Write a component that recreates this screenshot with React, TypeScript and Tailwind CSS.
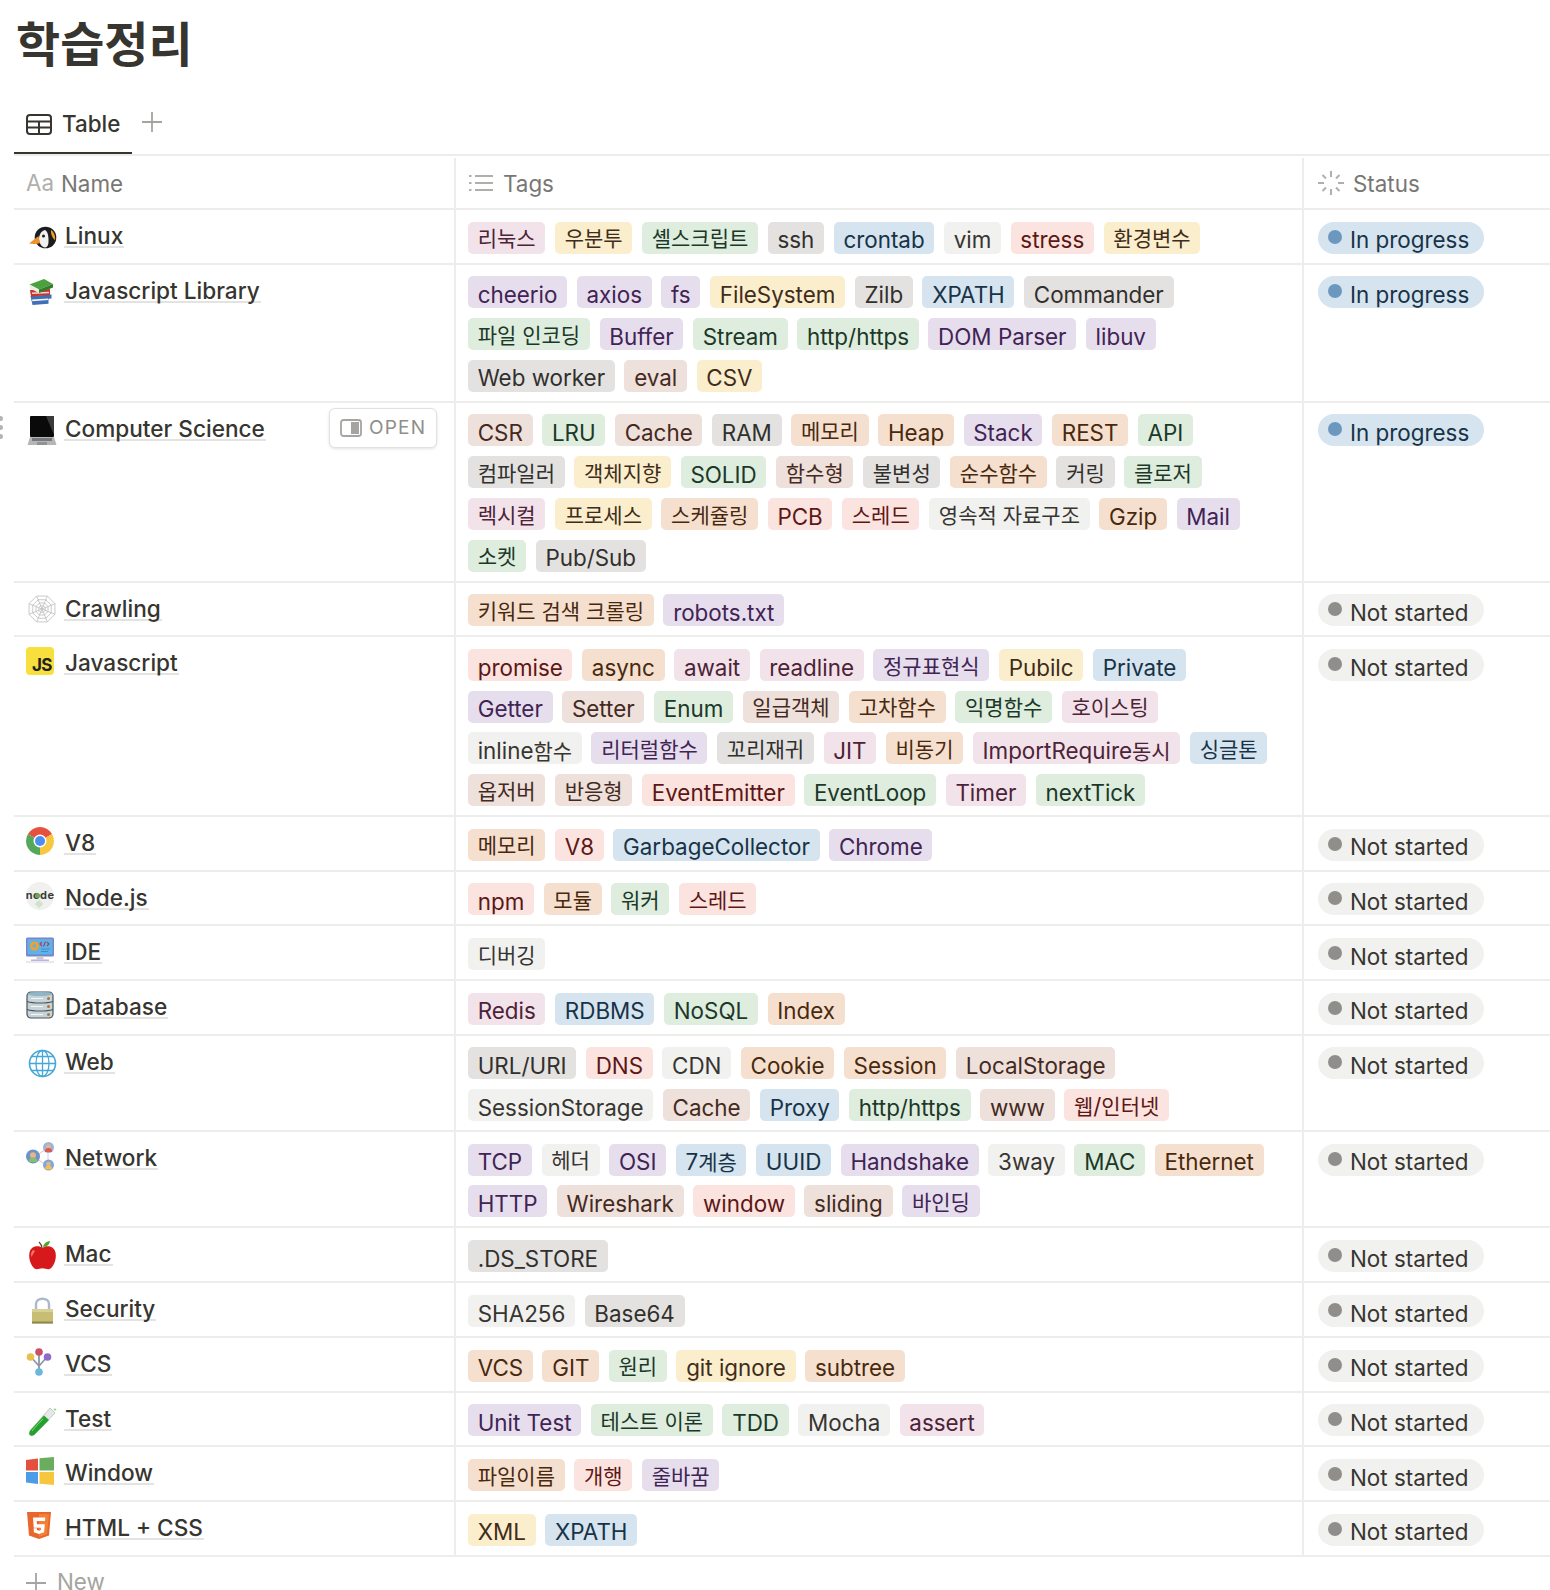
import React from 'react';

type Color = 'gy' | 'd' | 'br' | 'o' | 'y' | 'g' | 'bl' | 'pu' | 'pk' | 'r';

const tagStyles: Record<Color, string> = {
  gy: 'bg-[#e3e2e0] text-[#32302c]',
  d: 'bg-[#f1f1f0] text-[#37352f]',
  br: 'bg-[#eee0db] text-[#442a1e]',
  o: 'bg-[#f5e0d0] text-[#49290e]',
  y: 'bg-[#fbeecc] text-[#402c1b]',
  g: 'bg-[#deeddd] text-[#1c3829]',
  bl: 'bg-[#d5e4ee] text-[#183347]',
  pu: 'bg-[#e6deed] text-[#412454]',
  pk: 'bg-[#f2e2ea] text-[#4c2337]',
  r: 'bg-[#fbe3df] text-[#5d1715]',
};

const Svg: React.FC<{ children: React.ReactNode }> = ({ children }) => (
  <svg width="28" height="28" viewBox="0 0 28 28" className="overflow-visible">
    {children}
  </svg>
);

const Penguin = () => (
  <Svg>
    <circle cx="19.500" cy="17.500" r="10.800" fill="#1d1d20" />
    <path d="M19 10c-4 1-6 5-6 9 0 4 2.500 8 6 8.500 3-.5 3.500-3 3.500-7 0-4-.5-9-3.500-10.500z" fill="#f1f1ee" />
    <path d="M25 10c3 2 4.500 6 4 10-2-1-4.500-6-4-10z" fill="#f0a020" />
    <circle cx="17.500" cy="16" r="1.500" fill="#1d1d20" />
    <path d="M12.500 16 3 23.500c3 .8 8 .5 11-.5z" fill="#f0922a" />
  </Svg>
);

const Books = () => (
  <Svg>
    <g transform="translate(1 0)">
      <path d="M3.500 21l21-1.500v4l-3 .3v5l-16 1.200z" fill="#3f6fb5" />
      <path d="M3 15l20-1v6l-19 1.500z" fill="#c9342f" />
      <path d="M5 24.500l16-1 .3 1.500-16 1.200z" fill="#f3f3f3" />
      <path d="M5 17.500l17-.8v1.500l-17 .9z" fill="#f1d9d0" />
      <path d="M2.500 9.500L17 4l9 5-14 5.500z" fill="#4ba13e" />
      <path d="M2.500 9.500l9.500 5v3.500L3 13.500z" fill="#e9efe4" />
      <path d="M12 14.500l14-5.500v3.500l-14 5.500z" fill="#2f7d2b" />
    </g>
  </Svg>
);

const Laptop = () => (
  <Svg>
    <rect x="4" y="3" width="24" height="21" rx="1" fill="#0a0a0a" />
    <path d="M20 3h7c.6 0 1 .4 1 1v18z" fill="#3a3a3c" />
    <path d="M4 24h24l2.500 8H1.500z" fill="#b4b6b8" />
    <rect x="6" y="25" width="20" height="3" fill="#77797c" />
    <rect x="11" y="29" width="10" height="3" fill="#909295" />
  </Svg>
);

const Web = () => {
  const pts = (r: number) =>
    Array.from({ length: 8 }, (_, i) => {
      const a = (i * Math.PI) / 4 + Math.PI / 8;
      return `${16 + r * Math.cos(a)},${16 + r * Math.sin(a)}`;
    }).join(' ');
  return (
    <Svg>
      {[14, 10, 6.500, 3.500].map((r) => (
        <polygon key={r} points={pts(r)} fill="none" stroke="#bdbdbb" strokeWidth="0.800" />
      ))}
      {[0, 1, 2, 3].map((i) => {
        const a = (i * Math.PI) / 4 + Math.PI / 8;
        return (
          <line
            key={i}
            x1={16 - 14 * Math.cos(a)}
            y1={16 - 14 * Math.sin(a)}
            x2={16 + 14 * Math.cos(a)}
            y2={16 + 14 * Math.sin(a)}
            stroke="#bdbdbb"
            strokeWidth="0.800"
          />
        );
      })}
    </Svg>
  );
};

const JsLogo = () => (
  <div className="flex h-[28px] w-[28px] items-end justify-end rounded-[4px] bg-[#f7df3e] pr-[2px] text-[17px] leading-[20px] font-bold tracking-[-0.5px] text-[#222]">
    JS
  </div>
);

const Chrome = () => (
  <Svg>
    <path d="M14 14L1.900 7A14 14 0 0 1 26.100 7Z" fill="#e5503f" />
    <path d="M14 14L26.100 7A14 14 0 0 1 14 28Z" fill="#f8c73d" />
    <path d="M14 14L14 28A14 14 0 0 1 1.900 7Z" fill="#55a85a" />
    <circle cx="14" cy="14" r="6.500" fill="#fff" />
    <circle cx="14" cy="14" r="5" fill="#4c8ff0" />
  </Svg>
);

const NodeLogo = () => (
  <div className="relative flex h-[28px] w-[28px] justify-center rounded-full bg-[#f0f0ef] pt-[8px] text-[11px] leading-[11px] font-bold tracking-[0.4px] text-[#3c3c3c]">
    node
    <span className="absolute top-[19px] left-[10px] h-[6px] w-[6px] rotate-45 bg-[#cfe3cf]" />
    <span className="absolute top-[11px] left-[9px] h-[5px] w-[5px] rounded-full bg-[#6aa84f]" />
  </div>
);

const Ide = () => (
  <Svg>
    <rect x="0" y="1.500" width="28" height="19" rx="1.500" fill="#7b84c8" />
    <rect x="1.500" y="3" width="25" height="15.500" fill="#5db3e8" />
    <circle cx="8.500" cy="10" r="4.500" fill="#f3a02e" />
    <circle cx="8.500" cy="10" r="1.800" fill="#5db3e8" />
    <path d="M16 6l-2 2 2 2M21 6l2 2-2 2M19.500 5.500l-2 5" fill="none" stroke="#a83d5c" strokeWidth="1.100" />
    <path d="M15 13h9M15 15.500h7" stroke="#3f8fc8" strokeWidth="1.200" />
    <rect x="10.500" y="20.500" width="7" height="3" fill="#c9c9d4" />
    <rect x="5" y="23.500" width="18" height="1.500" fill="#b9b6d6" />
    <rect x="0" y="25.500" width="28" height="1" fill="#d6d3e6" />
  </Svg>
);

const Database = () => (
  <Svg>
    <rect x="1" y="1" width="26" height="26" rx="4" fill="#c6d4da" stroke="#48545a" strokeWidth="1.200" />
    <ellipse cx="14" cy="3" rx="12.500" ry="2" fill="#8fb6c7" />
    <path d="M1 10.500c6 2 20 2 26 0M1 18.500c6 2 20 2 26 0" fill="none" stroke="#48545a" strokeWidth="1.200" />
    <path d="M5 7.500h12M5 15.500h12M5 23.500h12" stroke="#f3f5f6" strokeWidth="1.200" />
    <circle cx="22.500" cy="7.500" r="1.500" fill="#b87333" />
    <circle cx="22.500" cy="15.500" r="1.500" fill="#b87333" />
    <circle cx="22.500" cy="23.500" r="1.500" fill="#b87333" />
  </Svg>
);

const Globe = () => (
  <Svg>
    <g fill="none" stroke="#45a7d8" strokeWidth="1.300">
      <circle cx="16.500" cy="17.500" r="13" strokeWidth="1.600" />
      <ellipse cx="16.500" cy="17.500" rx="6.500" ry="13" />
      <path d="M16.500 4.500v26M3.500 17.500h26M5.500 10.500h22M5.500 24.500h22" />
    </g>
  </Svg>
);

const Person: React.FC<{ cx: number; cy: number; r: number; bg: string; body: string; head: string }> = ({ cx, cy, r, bg, body, head }) => (
  <g>
    <circle cx={cx} cy={cy} r={r} fill={bg} />
    <circle cx={cx} cy={cy - r * 0.18} r={r * 0.42} fill={head} />
    <path d={`M${cx - r * 0.65} ${cy + r * 0.8}a${r * 0.65} ${r * 0.7} 0 0 1 ${r * 1.3} 0z`} fill={body} />
  </g>
);

const NetworkIcon = () => (
  <Svg>
    <path d="M22 6v18M8 15l14-9M8 15l14 9" stroke="#e0a9a9" strokeWidth="0.700" />
    <Person cx={7} cy={14.500} r={7} bg="#6f93c9" body="#86c06e" head="#e8b58c" />
    <Person cx={22.500} cy={5.500} r={5.500} bg="#9bb4dc" body="#e0574f" head="#e8b58c" />
    <Person cx={22.500} cy={23} r={5.500} bg="#7fa6dd" body="#f1c24d" head="#e8b58c" />
  </Svg>
);

const Apple = () => (
  <Svg>
    <path d="M16.500 10c-3-2.500-11-3-13 4.500-1.500 7 2.500 15 6 16.500 2 .6 4.500-.8 7-.8s5 1.500 7 .8c4-1.500 7.500-10 6-16.500-2-7.500-10-7-13-4.500z" fill="#d8191c" />
    <path d="M7 12c-2 2-2.500 5-1.500 7 1-2 2-4 3.500-6z" fill="#f47b75" />
    <path d="M16 10c0-2-1-4-3-6" fill="none" stroke="#6b4226" strokeWidth="1.200" />
    <path d="M17 9c.5-3 3-5.500 7-6-.3 3-3 6-7 6z" fill="#4da52c" />
  </Svg>
);

const Lock = () => (
  <Svg>
    <path d="M10 17v-6c0-7 13-7 13 0v6" fill="none" stroke="#a9bacb" strokeWidth="2.400" />
    <path d="M6 16h21v14.500H6z" fill="#c7bd75" />
    <path d="M6 16h21v3H6z" fill="#d9d095" />
    <path d="M6 28.500h21v2H6z" fill="#8f8750" />
  </Svg>
);

const Vcs = () => (
  <Svg>
    <path d="M13 24V7M13 18L5 9M13 18l8-9" fill="none" stroke="#8a99a5" strokeWidth="1.800" />
    <circle cx="13" cy="4" r="3.800" fill="#c9506b" />
    <circle cx="4.500" cy="9" r="3.800" fill="#e8c04d" />
    <circle cx="21.500" cy="9" r="3.800" fill="#8f6cc9" />
    <circle cx="13" cy="24" r="3.800" fill="#6cb7de" />
  </Svg>
);

const TestTube = () => (
  <Svg>
    <path d="M24 5l5 5L10 30c-2 2.500-4.500 3.500-6 2-1.500-1.500-.5-4 2-6.500z" fill="#e4e8e6" stroke="#a8aeac" strokeWidth="0.600" />
    <path d="M18 12.500l5 4.500L10 30c-2 2.500-4.500 3.500-6 2-1.500-1.500-.5-4 2-6.500z" fill="#25a22d" />
    <path d="M6 28c3-4 7-8 11-12" fill="none" stroke="#7ddb6f" strokeWidth="1" />
    <path d="M29 4.500l.5 1.500 1.500.5-1.500.5-.5 1.500-.5-1.500-1.500-.5 1.500-.5z" fill="#7ddb6f" />
  </Svg>
);

const WindowsLogo = () => (
  <Svg>
    <path d="M0 3l12-1.500V13.500H0z" fill="#e4503f" />
    <path d="M13.500 1.300L28 0v13.500H13.500z" fill="#6aad5e" />
    <path d="M0 15h12v12L0 25.500z" fill="#4d9ce8" />
    <path d="M13.500 15H28v13l-14.500-1.300z" fill="#f7c63f" />
  </Svg>
);

const Html5 = () => (
  <Svg>
    <path d="M1 0h24l-2 23.500L13 27 3 23.500z" fill="#e8672a" />
    <path d="M13 2v23l8-2.700L23 2z" fill="#f08136" />
    <path d="M7 5.500h12.300l-.3 3.500h-8.300l.3 3.300H18.800l-.7 8L13 22l-5.100-1.700-.3-4h3.300l.2 1.800 1.900.6 1.900-.6.200-2.400H7.700z" fill="#fff" />
  </Svg>
);

const TableIcon = () => (
  <svg width="26" height="21" viewBox="0 0 26 21" fill="none" stroke="#37352f" strokeWidth="2">
    <rect x="1" y="1" width="24" height="19" rx="3" />
    <path d="M1 7.500h24M1 13.500h24M13 7.500V20" />
  </svg>
);

const PlusIcon: React.FC<{ size: number }> = ({ size }) => (
  <svg width={size} height={size} viewBox="0 0 20 20" stroke="#a5a4a0" strokeWidth="1.800" className="shrink-0">
    <path d="M10 0v20M0 10h20" />
  </svg>
);

const ListIcon = () => (
  <svg width="24" height="18" viewBox="0 0 24 18" stroke="#b0afab" strokeWidth="1.800">
    <path d="M6 2h18M6 9h18M6 16h18M0 2h2.500M0 9h2.500M0 16h2.500" />
  </svg>
);

const SpinnerIcon = () => (
  <svg width="26" height="24" viewBox="-13 -12 26 24" stroke="#b0afab" strokeWidth="2">
    <path d="M0-12v6M0 6v6M-13 0h6M7 0h6M-8.500-8l3.500 3.500M8.500-8L5-4.500M-8.500 8L-5 4.500M8.500 8L5 4.500" />
  </svg>
);

const PanelIcon = () => (
  <svg width="22" height="18" viewBox="0 0 22 18" fill="none">
    <rect x="1" y="1" width="20" height="16" rx="2.500" stroke="#a5a4a0" strokeWidth="1.800" />
    <rect x="11" y="3" width="8" height="12" fill="#a5a4a0" />
  </svg>
);

interface Row {
  name: string;
  icon: React.ReactNode;
  status: 'In progress' | 'Not started';
  lines: [string, Color][][];
  hover?: boolean;
}

const rows: Row[] = [
  {
    name: 'Linux',
    icon: <Penguin />,
    status: 'In progress',
    lines: [[['리눅스', 'pk'], ['우분투', 'y'], ['셸스크립트', 'g'], ['ssh', 'gy'], ['crontab', 'bl'], ['vim', 'd'], ['stress', 'r'], ['환경변수', 'y']]],
  },
  {
    name: 'Javascript Library',
    icon: <Books />,
    status: 'In progress',
    lines: [
      [['cheerio', 'pu'], ['axios', 'pu'], ['fs', 'pu'], ['FileSystem', 'y'], ['Zilb', 'gy'], ['XPATH', 'bl'], ['Commander', 'gy']],
      [['파일 인코딩', 'g'], ['Buffer', 'pu'], ['Stream', 'g'], ['http/https', 'g'], ['DOM Parser', 'pu'], ['libuv', 'pu']],
      [['Web worker', 'gy'], ['eval', 'br'], ['CSV', 'y']],
    ],
  },
  {
    name: 'Computer Science',
    icon: <Laptop />,
    status: 'In progress',
    hover: true,
    lines: [
      [['CSR', 'br'], ['LRU', 'g'], ['Cache', 'br'], ['RAM', 'gy'], ['메모리', 'o'], ['Heap', 'o'], ['Stack', 'pu'], ['REST', 'o'], ['API', 'g']],
      [['컴파일러', 'gy'], ['객체지향', 'y'], ['SOLID', 'g'], ['함수형', 'br'], ['불변성', 'gy'], ['순수함수', 'o'], ['커링', 'gy'], ['클로저', 'g']],
      [['렉시컬', 'pk'], ['프로세스', 'y'], ['스케쥴링', 'o'], ['PCB', 'r'], ['스레드', 'r'], ['영속적 자료구조', 'd'], ['Gzip', 'o'], ['Mail', 'pu']],
      [['소켓', 'g'], ['Pub/Sub', 'gy']],
    ],
  },
  {
    name: 'Crawling',
    icon: <Web />,
    status: 'Not started',
    lines: [[['키워드 검색 크롤링', 'o'], ['robots.txt', 'pu']]],
  },
  {
    name: 'Javascript',
    icon: <JsLogo />,
    status: 'Not started',
    lines: [
      [['promise', 'r'], ['async', 'o'], ['await', 'pk'], ['readline', 'pk'], ['정규표현식', 'pu'], ['Pubilc', 'y'], ['Private', 'bl']],
      [['Getter', 'pu'], ['Setter', 'br'], ['Enum', 'g'], ['일급객체', 'br'], ['고차함수', 'o'], ['익명함수', 'g'], ['호이스팅', 'pk']],
      [['inline함수', 'd'], ['리터럴함수', 'pu'], ['꼬리재귀', 'gy'], ['JIT', 'pk'], ['비동기', 'o'], ['ImportRequire동시', 'pk'], ['싱글톤', 'bl']],
      [['옵저버', 'br'], ['반응형', 'br'], ['EventEmitter', 'r'], ['EventLoop', 'g'], ['Timer', 'pk'], ['nextTick', 'g']],
    ],
  },
  {
    name: 'V8',
    icon: <Chrome />,
    status: 'Not started',
    lines: [[['메모리', 'o'], ['V8', 'r'], ['GarbageCollector', 'bl'], ['Chrome', 'pu']]],
  },
  {
    name: 'Node.js',
    icon: <NodeLogo />,
    status: 'Not started',
    lines: [[['npm', 'r'], ['모듈', 'o'], ['워커', 'g'], ['스레드', 'r']]],
  },
  { name: 'IDE', icon: <Ide />, status: 'Not started', lines: [[['디버깅', 'd']]] },
  {
    name: 'Database',
    icon: <Database />,
    status: 'Not started',
    lines: [[['Redis', 'pk'], ['RDBMS', 'bl'], ['NoSQL', 'g'], ['Index', 'o']]],
  },
  {
    name: 'Web',
    icon: <Globe />,
    status: 'Not started',
    lines: [
      [['URL/URI', 'gy'], ['DNS', 'r'], ['CDN', 'd'], ['Cookie', 'o'], ['Session', 'o'], ['LocalStorage', 'br']],
      [['SessionStorage', 'd'], ['Cache', 'br'], ['Proxy', 'bl'], ['http/https', 'g'], ['www', 'br'], ['웹/인터넷', 'r']],
    ],
  },
  {
    name: 'Network',
    icon: <NetworkIcon />,
    status: 'Not started',
    lines: [
      [['TCP', 'pu'], ['헤더', 'd'], ['OSI', 'pu'], ['7계층', 'bl'], ['UUID', 'bl'], ['Handshake', 'pu'], ['3way', 'd'], ['MAC', 'g'], ['Ethernet', 'o']],
      [['HTTP', 'pu'], ['Wireshark', 'br'], ['window', 'r'], ['sliding', 'br'], ['바인딩', 'pu']],
    ],
  },
  { name: 'Mac', icon: <Apple />, status: 'Not started', lines: [[['.DS_STORE', 'gy']]] },
  {
    name: 'Security',
    icon: <Lock />,
    status: 'Not started',
    lines: [[['SHA256', 'd'], ['Base64', 'gy']]],
  },
  {
    name: 'VCS',
    icon: <Vcs />,
    status: 'Not started',
    lines: [[['VCS', 'o'], ['GIT', 'o'], ['원리', 'g'], ['git ignore', 'y'], ['subtree', 'o']]],
  },
  {
    name: 'Test',
    icon: <TestTube />,
    status: 'Not started',
    lines: [[['Unit Test', 'pu'], ['테스트 이론', 'g'], ['TDD', 'g'], ['Mocha', 'd'], ['assert', 'pk']]],
  },
  {
    name: 'Window',
    icon: <WindowsLogo />,
    status: 'Not started',
    lines: [[['파일이름', 'o'], ['개행', 'r'], ['줄바꿈', 'pu']]],
  },
  {
    name: 'HTML + CSS',
    icon: <Html5 />,
    status: 'Not started',
    lines: [[['XML', 'y'], ['XPATH', 'bl']]],
  },
];

const hangulRun = /([가-힣]+(?: [가-힣]+)*)/;

// the reference's hangul font runs narrower than Noto, so hangul gets a smaller size
const TagLabel: React.FC<{ label: string }> = ({ label }) => (
  <span>
    {label.split(hangulRun).map((part, i) =>
      i % 2 === 1 ? (
        <span key={i} className="text-[21px]">
          {part}
        </span>
      ) : (
        part
      ),
    )}
  </span>
);

const Tag: React.FC<{ label: string; color: Color }> = ({ label, color }) => {
  const hasLatin = /[A-Za-z0-9]/.test(label);
  return (
    <span
      className={`flex h-[32px] items-center rounded-[5px] px-[9.7px] whitespace-nowrap ${hasLatin ? 'pt-[5px]' : 'pt-[1px]'} ${tagStyles[color]}`}
    >
      <TagLabel label={label} />
    </span>
  );
};

const StatusPill: React.FC<{ status: Row['status'] }> = ({ status }) => {
  const active = status === 'In progress';
  return (
    <div
      className={`flex h-[32px] w-[166px] items-center rounded-full pl-[10px] ${
        active ? 'bg-[#d5e4ee] text-[#183347]' : 'bg-[#f1f1f0] text-[#37352f]'
      }`}
    >
      <span className={`mb-[2px] h-[14px] w-[14px] rounded-full ${active ? 'bg-[#6c98bf]' : 'bg-[#8f8e8b]'}`} />
      <span className="ml-[8px] pt-[5px]">{status}</span>
    </div>
  );
};

export default function App() {
  return (
    <div className="relative h-[1590px] w-[1550px] overflow-hidden bg-white pl-[14px] font-[Inter,'Noto_Sans_CJK_KR',sans-serif] text-[22.4px] text-[#37352f]">
      <h1 className="pt-[16px] pl-[2px] text-[48px] leading-[57px] font-bold">학습정리</h1>

      {/* Tabs */}
      <div className="mt-[26px] flex h-[57px] border-b-2 border-[#ededec]">
        <div className="flex w-[118px] items-start gap-[10px] border-b-2 border-[#37352f] pt-[12px] pl-[12px]">
          <span className="mt-[3px]"><TableIcon /></span>
          <span className="leading-[26px] font-medium">Table</span>
        </div>
        <div className="pt-[13px] pl-[10px]">
          <PlusIcon size={20} />
        </div>
      </div>

      {/* Header */}
      <div className="flex h-[54px] border-b-2 border-[#ededec] pt-[2px] text-[#787774]">
        <div className="flex w-[442px] items-center border-r-2 border-[#ededec] pl-[12px]">
          <span className="w-[35px] text-[#b0afab]">Aa</span>
          <span className="pt-[2px]">Name</span>
        </div>
        <div className="flex w-[848px] items-center gap-[10px] border-r-2 border-[#ededec] pl-[13px]">
          <ListIcon />
          <span className="pt-[2px]">Tags</span>
        </div>
        <div className="flex items-center gap-[9px] pl-[14px]">
          <SpinnerIcon />
          <span className="pt-[2px]">Status</span>
        </div>
      </div>

      {/* Rows */}
      {rows.map((row) => (
        <div key={row.name} className="flex border-b-2 border-[#ededec]">
          <div className="relative flex w-[442px] items-start border-r-2 border-[#ededec] pt-[10px] pl-[12px]">
            <div className="h-[28px] w-[28px] shrink-0">{row.icon}</div>
            <span className="mt-[5px] ml-[10px] border-b-2 border-[#e3e3e2] px-[1px] text-[22.6px] leading-[21px] font-medium">{row.name}</span>
            {row.hover && (
              <div className="absolute top-[5px] right-[17px] flex h-[40px] w-[108px] items-center gap-[7px] rounded-[6px] border border-[#e3e2e0] bg-white pl-[10px] text-[19px] tracking-[1.2px] text-[#8f8e8b] shadow-[0_1px_3px_rgba(15,15,15,0.12)]">
                <PanelIcon />
                <span>OPEN</span>
              </div>
            )}
          </div>
          <div className="flex w-[848px] flex-col gap-y-[9.7px] border-r-2 border-[#ededec] pt-[11.7px] pb-[9px] pl-[12px]">
            {row.lines.map((line, i) => (
              <div key={i} className="flex gap-x-[9.7px]">
                {line.map(([label, color]) => (
                  <Tag key={label} label={label} color={color} />
                ))}
              </div>
            ))}
          </div>
          <div className="pt-[11.7px] pl-[14px]">
            <StatusPill status={row.status} />
          </div>
        </div>
      ))}

      {/* New row */}
      <div className="flex items-start gap-[11px] pt-[16px] pl-[12px] text-[#a5a4a0]">
        <PlusIcon size={20} />
        <span className="leading-[17px]">New</span>
      </div>

      {/* Drag handle */}
      <div className="absolute top-[416px] left-[-2px] flex flex-col gap-[4px]">
        <span className="h-[5px] w-[5px] rounded-full bg-[#b5b4b1]" />
        <span className="h-[5px] w-[5px] rounded-full bg-[#b5b4b1]" />
        <span className="h-[5px] w-[5px] rounded-full bg-[#b5b4b1]" />
      </div>
    </div>
  );
}
